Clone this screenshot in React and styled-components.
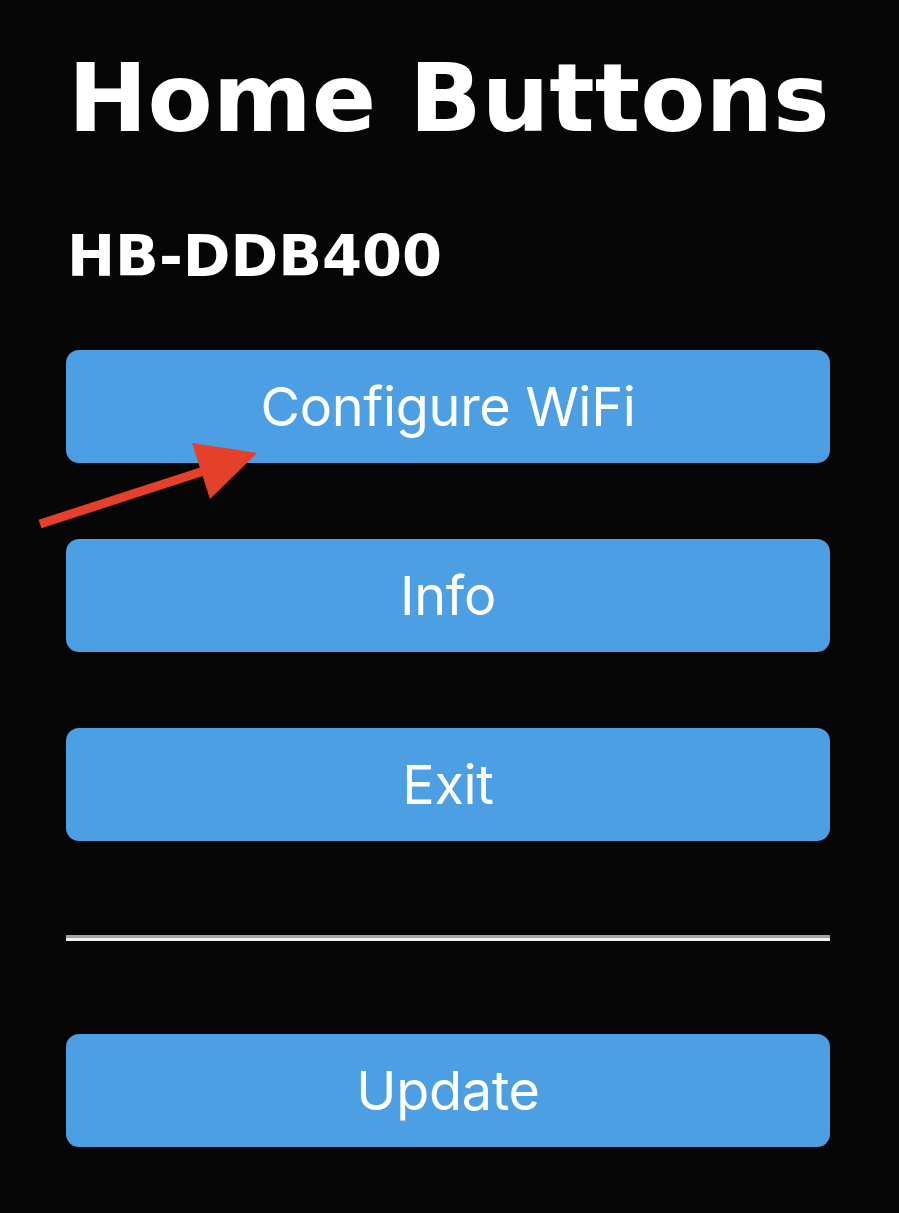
import React from "react";
import styled, { createGlobalStyle } from "styled-components";

const Global = createGlobalStyle`
  html, body { margin: 0; padding: 0; background: #060606; }
  body { font-family: "DejaVu Sans", sans-serif; }
`;

const Page = styled.div`
  position: relative;
  min-height: 1213px;
  box-sizing: border-box;
  padding: 42px 69px 60px 66px;
  background: #060606;
  color: #ffffff;
  display: flex;
  flex-direction: column;
`;

const Title = styled.h1`
  margin: 0;
  font-family: "DejaVu Sans", sans-serif;
  font-weight: bold;
  font-size: 95px;
  line-height: 112px;
  padding-left: 2px;
  white-space: nowrap;
`;

const Subtitle = styled.h3`
  margin: 70px 0 0 0;
  font-family: "DejaVu Sans", sans-serif;
  font-weight: bold;
  font-size: 57.5px;
  line-height: 65px;
  padding-left: 1px;
  white-space: nowrap;
`;

const ButtonGroup = styled.div`
  display: flex;
  flex-direction: column;
  gap: 76px;
  margin-top: ${(p) => p.$top}px;
`;

const Button = styled.button`
  height: 113px;
  width: 100%;
  border: none;
  border-radius: 13px;
  background: #4c9fe2;
  color: #ffffff;
  font-family: Inter, "Noto Sans", sans-serif;
  font-size: 54px;
  font-weight: 400;
  letter-spacing: -0.3px;
  display: flex;
  align-items: center;
  justify-content: center;
  padding: 0;
  cursor: pointer;
`;

const Divider = styled.hr`
  margin: 94px 0 0 0;
  height: 0;
  border: none;
  border-top: 3px solid #a4a4a4;
  border-bottom: 3px solid #efefef;
`;

const Arrow = styled.svg`
  position: absolute;
  left: 0;
  top: 0;
  pointer-events: none;
`;

export default function App() {
  return (
    <>
      <Global />
      <Page>
        <Title>Home Buttons</Title>
        <Subtitle>HB-DDB400</Subtitle>
        <ButtonGroup $top={61}>
          <Button>Configure WiFi</Button>
          <Button>Info</Button>
          <Button>Exit</Button>
        </ButtonGroup>
        <Divider />
        <ButtonGroup $top={93}>
          <Button>Update</Button>
        </ButtonGroup>
        <Arrow width="300" height="560" viewBox="0 0 300 560">
          <line x1="40" y1="524" x2="210" y2="469" stroke="#e5402a" strokeWidth="9" />
          <polygon points="192,443 257,453 210,499" fill="#e5402a" />
        </Arrow>
      </Page>
    </>
  );
}
